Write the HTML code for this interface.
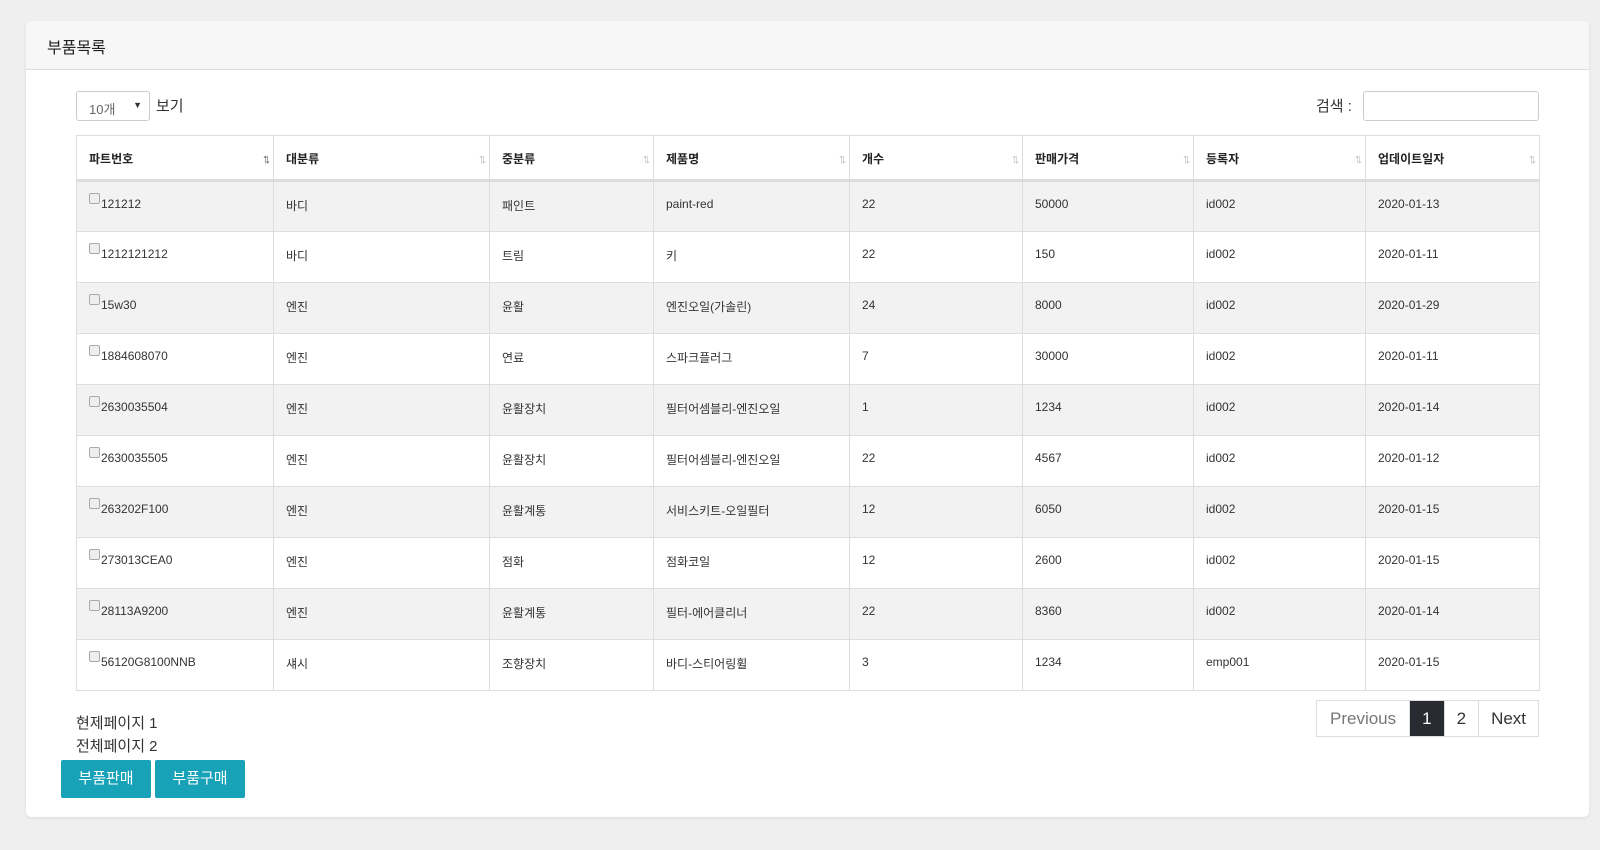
<!DOCTYPE html>
<html><head><meta charset="utf-8"><style>
*{box-sizing:border-box;margin:0;padding:0}
body{width:1600px;height:850px;background:#efefef;font-family:"Liberation Sans","Noto Sans CJK KR",sans-serif;color:#333;position:relative;overflow:hidden}
.card{position:absolute;left:26px;top:21px;width:1563px;height:796px;background:#fff;border-radius:5px;box-shadow:0 1px 3px rgba(0,0,0,.08)}
.hdr{height:49px;background:#f7f7f7;border-bottom:1px solid #ddd;border-radius:5px 5px 0 0;padding:13px 0 0 21px;font-size:16px;color:#222}
.sel{position:absolute;left:50px;top:70px;width:74px;height:30px;border:1px solid #ccc;border-radius:3px;font-size:13px;color:#666;padding:7px 0 0 12px}
.sel span{position:absolute;right:7px;top:8px;font-size:9px;color:#333}
.bogi{position:absolute;left:130px;top:74px;font-size:15px}
.srch{position:absolute;left:1290px;top:74px;font-size:15px}
.inp{position:absolute;left:1337px;top:70px;width:176px;height:30px;border:1px solid #ccc;border-radius:3px}
table{position:absolute;left:50px;top:114px;width:1463px;border-collapse:collapse;font-size:12px;table-layout:fixed}
th,td{border:1px solid #ddd;text-align:left;padding:0 12px;vertical-align:top}
th{height:45px;border-bottom:3px solid #ddd;font-weight:bold;padding-top:14px;position:relative;color:#222}
th:after{content:"↑↓";position:absolute;right:6px;top:15px;font-size:13px;color:#bbb;letter-spacing:-4px}
th:first-child:after{color:#555}
td{height:51px;padding-top:15px;color:#333}
tr:nth-child(even) td{background:#f2f2f2}
.cb{display:inline-block;width:11px;height:11px;border:1px solid #aaa;border-radius:2px;background:#eee;vertical-align:-1px;margin-right:1px;position:relative;top:-5px}
.pg{position:absolute;left:50px;top:691px;font-size:15px;line-height:23px;color:#333}
.btn{position:absolute;top:739px;height:38px;width:90px;background:#17a2b8;color:#fff;font-size:15px;text-align:center;line-height:37px;border-radius:2px}
.pag{position:absolute;left:1290px;top:679px;display:flex;height:37px;font-size:17px;border:1px solid #ddd}
.pag div{padding:0 12px;line-height:36px;border-left:1px solid #ddd;color:#333}
.pag div:first-child{border-left:0;color:#777;padding:0 13px}
.pag .a{background:#292b33;color:#fff}
</style></head><body>
<div class="card">
<div class="hdr">부품목록</div>
<div class="sel">10개<span>▼</span></div>
<div class="bogi">보기</div>
<div class="srch">검색 :</div>
<div class="inp"></div>
<table>
<colgroup><col style="width:197px"><col style="width:216px"><col style="width:164px"><col style="width:196px"><col style="width:173px"><col style="width:171px"><col style="width:172px"><col style="width:174px"></colgroup>
<tr><th>파트번호</th><th>대분류</th><th>중분류</th><th>제품명</th><th>개수</th><th>판매가격</th><th>등록자</th><th>업데이트일자</th></tr>
<tr><td><span class="cb"></span>121212</td><td>바디</td><td>패인트</td><td>paint-red</td><td>22</td><td>50000</td><td>id002</td><td>2020-01-13</td></tr>
<tr><td><span class="cb"></span>1212121212</td><td>바디</td><td>트림</td><td>키</td><td>22</td><td>150</td><td>id002</td><td>2020-01-11</td></tr>
<tr><td><span class="cb"></span>15w30</td><td>엔진</td><td>윤활</td><td>엔진오일(가솔린)</td><td>24</td><td>8000</td><td>id002</td><td>2020-01-29</td></tr>
<tr><td><span class="cb"></span>1884608070</td><td>엔진</td><td>연료</td><td>스파크플러그</td><td>7</td><td>30000</td><td>id002</td><td>2020-01-11</td></tr>
<tr><td><span class="cb"></span>2630035504</td><td>엔진</td><td>윤활장치</td><td>필터어셈블리-엔진오일</td><td>1</td><td>1234</td><td>id002</td><td>2020-01-14</td></tr>
<tr><td><span class="cb"></span>2630035505</td><td>엔진</td><td>윤활장치</td><td>필터어셈블리-엔진오일</td><td>22</td><td>4567</td><td>id002</td><td>2020-01-12</td></tr>
<tr><td><span class="cb"></span>263202F100</td><td>엔진</td><td>윤활계통</td><td>서비스키트-오일필터</td><td>12</td><td>6050</td><td>id002</td><td>2020-01-15</td></tr>
<tr><td><span class="cb"></span>273013CEA0</td><td>엔진</td><td>점화</td><td>점화코일</td><td>12</td><td>2600</td><td>id002</td><td>2020-01-15</td></tr>
<tr><td><span class="cb"></span>28113A9200</td><td>엔진</td><td>윤활계통</td><td>필터-에어클리너</td><td>22</td><td>8360</td><td>id002</td><td>2020-01-14</td></tr>
<tr><td><span class="cb"></span>56120G8100NNB</td><td>섀시</td><td>조향장치</td><td>바디-스티어링휠</td><td>3</td><td>1234</td><td>emp001</td><td>2020-01-15</td></tr>
</table>
<div class="pg">현제페이지 1<br>전체페이지 2</div>
<div class="btn" style="left:35px">부품판매</div>
<div class="btn" style="left:129px">부품구매</div>
<div class="pag"><div>Previous</div><div class="a">1</div><div>2</div><div>Next</div></div>
</div>
</body></html>
